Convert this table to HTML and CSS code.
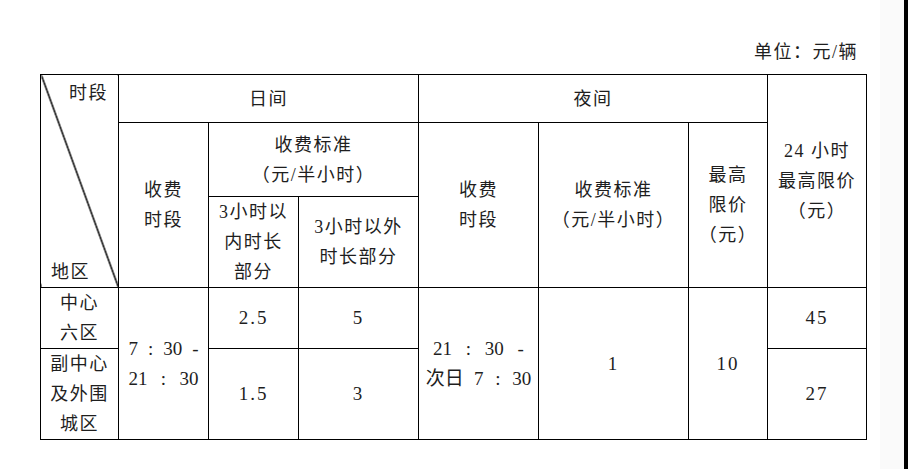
FILE: index.html
```html
<!DOCTYPE html>
<html lang="zh-CN">
<head>
<meta charset="utf-8">
<title>收费标准</title>
<link rel="stylesheet" href="styles.css">
</head>
<body>
<div class="page">
  <div class="sheet">
    <div class="caption">单位：元/辆</div>
    <table class="fees">
      <colgroup>
        <col class="c1"><col class="c2"><col class="c3"><col class="c4">
        <col class="c5"><col class="c6"><col class="c7"><col class="c8">
      </colgroup>
      <tr class="r1">
        <td class="corner" rowspan="3">
          <div class="corner-box">
            <span class="corner-top">时段</span>
            <span class="corner-bottom">地区</span>
          </div>
        </td>
        <td colspan="3">日间</td>
        <td colspan="3">夜间</td>
        <td rowspan="3">24 小时<br>最高限价<br>（元）</td>
      </tr>
      <tr class="r2">
        <td rowspan="2">收费<br>时段</td>
        <td colspan="2">收费标准<br>（元/半小时）</td>
        <td rowspan="2">收费<br>时段</td>
        <td rowspan="2">收费标准<br>（元/半小时）</td>
        <td rowspan="2">最高<br>限价<br>（元）</td>
      </tr>
      <tr class="r3">
        <td>3小时以<br>内时长<br>部分</td>
        <td>3小时以外<br>时长部分</td>
      </tr>
      <tr class="r4">
        <td>中心<br>六区</td>
        <td rowspan="2" class="time">
          <span class="just">7 : 30 -</span><br><span class="just">21 : 30</span>
        </td>
        <td class="num">2.5</td>
        <td class="num">5</td>
        <td rowspan="2" class="time night"><span class="night-1">21 : 30 -</span><br>次日<span class="night-2">7 : 30</span></td>
        <td rowspan="2" class="num">1</td>
        <td rowspan="2" class="num">10</td>
        <td class="num">45</td>
      </tr>
      <tr class="r5">
        <td>副中心<br>及外围<br>城区</td>
        <td class="num">1.5</td>
        <td class="num">3</td>
        <td class="num">27</td>
      </tr>
    </table>
  </div>
  <div class="edge"></div>
</div>
</body>
</html>
```

FILE: styles.css
```css
html, body {
  margin: 0;
  padding: 0;
  background: #ffffff;
  overflow: hidden;
}

.page {
  display: flex;
  width: 100%;
  height: 100vh;
}

.sheet {
  flex: 1 1 auto;
  min-width: 0;
  box-sizing: border-box;
  padding: 37px 0 0 40px;
  background: linear-gradient(to right, #ffffff 0, #ffffff 880px, #fafafa 880px);
  font-family: "Liberation Serif", "Noto Sans CJK SC", serif;
  font-size: 18px;
  color: #1e1e1e;
}

.edge {
  flex: 0 0 4px;
  width: 4px;
  background: #000000;
}

.caption {
  width: 818px;
  height: 30px;
  line-height: 30px;
  text-align: right;
  letter-spacing: 1.5px;
  margin-bottom: 7px;
}

.fees {
  border-collapse: collapse;
  table-layout: fixed;
  width: 827px;
  background: #ffffff;
}

.fees td {
  border: 1px solid #000000;
  padding: 0;
  text-align: center;
  vertical-align: middle;
  line-height: 30px;
  letter-spacing: 1.5px;
  white-space: nowrap;
}

.c1 { width: 78px; }
.c2 { width: 90px; }
.c3 { width: 90px; }
.c4 { width: 120px; }
.c5 { width: 120px; }
.c6 { width: 150px; }
.c7 { width: 79px; }
.c8 { width: 99px; }

.r1 { height: 48px; }
.r2 { height: 74px; }
.r3 { height: 91px; }
.r4 { height: 61px; }
.r5 { height: 91px; }

.fees td.corner {
  vertical-align: top;
  background: linear-gradient(to top right,
    transparent calc(50% - 1.1px),
    #000000 calc(50% - 0.4px),
    #000000 calc(50% + 0.4px),
    transparent calc(50% + 1.1px));
}

.corner-box {
  height: 212px;
  display: flex;
  flex-direction: column;
  justify-content: space-between;
}

.corner-top {
  align-self: flex-end;
  padding: 3px 10px 0 0;
}

.corner-bottom {
  align-self: flex-start;
  padding: 0 0 0 10px;
}

.fees td.num {
  font-size: 19px;
  letter-spacing: 2px;
}

.fees td.time {
  font-size: 19px;
  letter-spacing: 0;
}

.just {
  display: inline-block;
  width: 70px;
  text-align: justify;
  text-align-last: justify;
  vertical-align: top;
}

.night-1 {
  word-spacing: 9px;
}

.night-2 {
  margin-left: 10px;
  word-spacing: 7px;
}
```
